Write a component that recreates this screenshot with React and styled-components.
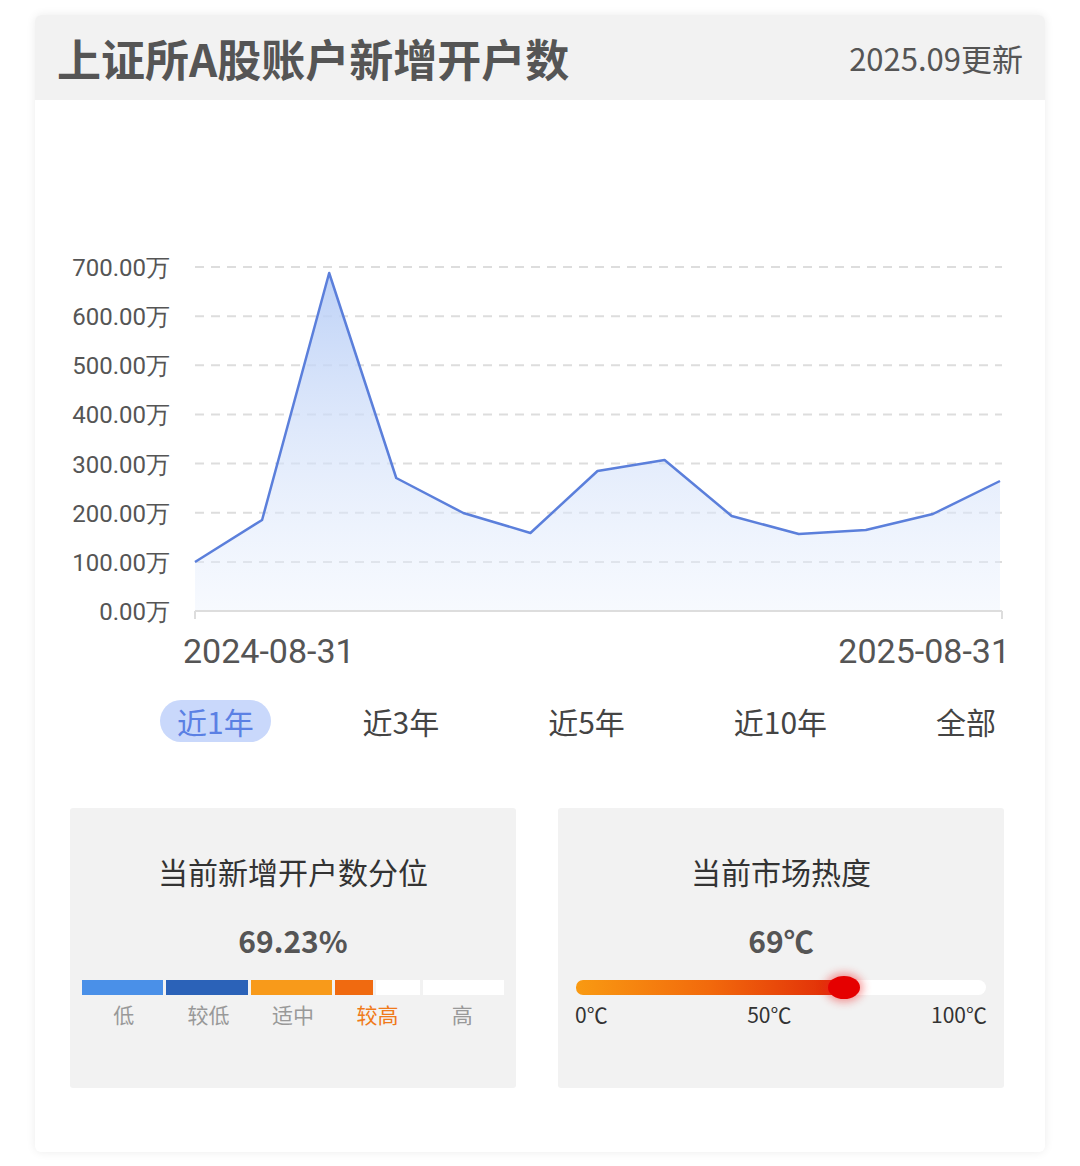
import React from "react";
import styled, { createGlobalStyle } from "styled-components";

const G = createGlobalStyle`
  body{margin:0;background:#fff;font-family:"Noto Sans CJK SC","Noto Sans",sans-serif;}
`;
const Page = styled.div`padding:15px 35px 14px 35px;`;
const Card = styled.div`background:#fff;box-shadow:0 0 10px rgba(0,0,0,0.08);border-radius:6px;overflow:hidden;height:1137px;display:flex;flex-direction:column;`;
const Header = styled.div`height:85px;flex-shrink:0;background:#f2f2f2;display:flex;align-items:center;justify-content:space-between;padding:0 22px 0 22px;`;
const Title = styled.div`font-size:44px;font-weight:700;color:#555;`;
const Upd = styled.div`font-size:31px;color:#555;`;
const ChartWrap = styled.div`height:565px;flex-shrink:0;`;
const Tabs = styled.div`display:flex;justify-content:space-between;padding:0 32px 0 125px;margin-top:35px;`;
const Tab = styled.div`font-size:30px;padding:0 17px;height:42px;line-height:42px;border-radius:21px;color:${p=>p.$on?"#5b80e4":"#444"};background:${p=>p.$on?"#c9d8fb":"transparent"};`;
const Panels = styled.div`display:grid;grid-template-columns:446px 446px;gap:42px;padding:0 0 0 35px;margin-top:66px;`;
const Panel = styled.div`background:#f2f2f2;height:280px;border-radius:3px;padding:43px 12px 0;box-sizing:border-box;display:flex;flex-direction:column;align-items:center;`;
const PTitle = styled.div`font-size:30px;color:#333;line-height:40px;`;
const PVal = styled.div`font-size:30px;font-weight:700;color:#555;margin-top:29px;line-height:40px;`;
const Bar = styled.div`display:flex;gap:3px;width:423px;height:15px;margin-top:20px;`;
const Seg = styled.div`flex:${p=>p.$f};background:${p=>p.$c};`;
const Labels = styled.div`display:flex;width:423px;margin-top:4px;`;
const Lab = styled.div`flex:1;text-align:center;font-size:21px;color:${p=>p.$c||"#999"};`;
const Heat = styled.div`width:410px;height:15px;margin-top:20px;background:#fff;border-radius:8px;position:relative;`;
const HeatFill = styled.div`position:absolute;left:0;top:0;bottom:0;width:265px;border-radius:7px 0 0 7px;background:linear-gradient(90deg,#f99a12,#f26a0c 50%,#e02a08);`;
const Dot = styled.div`position:absolute;left:252px;top:-4px;width:32px;height:23px;border-radius:50% 50% 50% 50% / 50%;background:#e50000;box-shadow:0 0 8px 3px rgba(240,30,30,0.45);clip-path:none;`;
const HeatLabs = styled.div`display:flex;justify-content:space-between;width:412px;margin-top:4px;font-size:21px;color:#333;`;

const vals=[562,520,273,478,513,533,471,460,516,534,530,514,481];
function Chart(){
  const xs=vals.map((_,i)=>160+i*(805/12));
  const pts=vals.map((v,i)=>`${xs[i]},${v-100}`).join(" ");
  const top=167, base=511;
  const labels=["700.00万","600.00万","500.00万","400.00万","300.00万","200.00万","100.00万","0.00万"];
  return (
    <svg width="1010" height="565" viewBox="0 0 1010 565">
      <defs>
        <linearGradient id="g" x1="0" y1="0" x2="0" y2="1">
          <stop offset="0" stopColor="#b7cdf6" stopOpacity="0.9"/>
          <stop offset="1" stopColor="#eaf1fd" stopOpacity="0.4"/>
        </linearGradient>
      </defs>
      {labels.map((l,i)=>{const y=top+i*49.15;return (
        <g key={l}>
          <text x="135" y={y+9} textAnchor="end" fontSize="24" fill="#555" fontFamily="Roboto,sans-serif">{l}</text>
          {i<7&&<line x1="160" x2="967" y1={y} y2={y} stroke="#ddd" strokeWidth="2" strokeDasharray="9 7"/>}
        </g>);})}
      <polygon points={`160,${base} ${pts} 965,${base}`} fill="url(#g)"/>
      <polyline points={pts} fill="none" stroke="#5b7fdb" strokeWidth="2.5" strokeLinejoin="round"/>
      <line x1="160" x2="967" y1={base} y2={base} stroke="#ddd" strokeWidth="2"/>
      <line x1="160" x2="160" y1={base} y2={base+8} stroke="#ddd" strokeWidth="2"/>
      <line x1="967" x2="967" y1={base} y2={base+8} stroke="#ddd" strokeWidth="2"/>
      <text x="148" y="563" fontSize="34" fill="#555" fontFamily="Roboto,sans-serif">2024-08-31</text>
      <text x="975" y="563" textAnchor="end" fontSize="34" fill="#555" fontFamily="Roboto,sans-serif">2025-08-31</text>
    </svg>
  );
}

export default function App(){
  return (<Page><G/>
    <Card>
      <Header><Title>上证所A股账户新增开户数</Title><Upd>2025.09更新</Upd></Header>
      <ChartWrap><Chart/></ChartWrap>
      <Tabs>{["近1年","近3年","近5年","近10年","全部"].map((t,i)=><Tab key={t} $on={i===0}>{t}</Tab>)}</Tabs>
      <Panels>
        <Panel>
          <PTitle>当前新增开户数分位</PTitle>
          <PVal>69.23%</PVal>
          <Bar>
            <Seg $f={82} $c="#4a90e8"/><Seg $f={82} $c="#2b62b8"/><Seg $f={82} $c="#f89a1a"/>
            <Seg $f={38} $c="#f06a10"/><Seg $f={44} $c="#fff"/><Seg $f={82} $c="#fff"/>
          </Bar>
          <Labels><Lab>低</Lab><Lab>较低</Lab><Lab>适中</Lab><Lab $c="#f07a1a">较高</Lab><Lab>高</Lab></Labels>
        </Panel>
        <Panel>
          <PTitle>当前市场热度</PTitle>
          <PVal>69℃</PVal>
          <Heat><HeatFill/><Dot/></Heat>
          <HeatLabs><span>0℃</span><span>50℃</span><span>100℃</span></HeatLabs>
        </Panel>
      </Panels>
    </Card>
  </Page>);
}
